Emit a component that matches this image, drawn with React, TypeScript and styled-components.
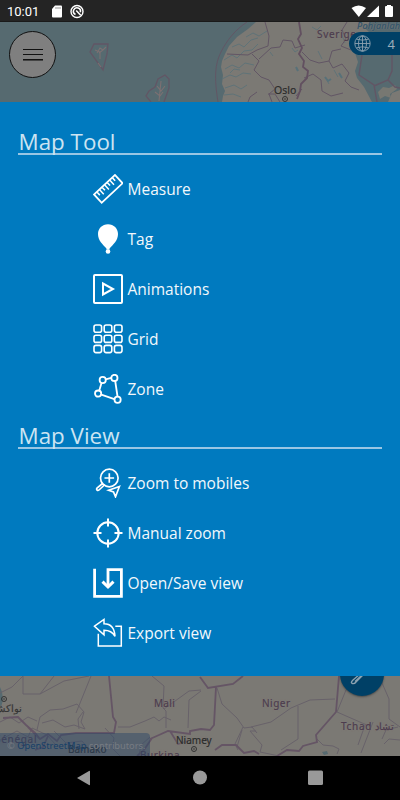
import React from "react";
import styled, { createGlobalStyle } from "styled-components";

const GlobalStyle = createGlobalStyle`
  * { box-sizing: border-box; }
  body { margin: 0; background: #000; font-family: "Noto Sans", "Open Sans", sans-serif; }
`;

const Screen = styled.div`
  width: 400px;
  height: 800px;
  display: flex;
  flex-direction: column;
  overflow: hidden;
`;

const StatusBar = styled.header`
  height: 22px;
  flex: none;
  display: flex;
  align-items: center;
  padding: 0 6px 0 7px;
  background: #242424;
  border-bottom: 1px solid #1a1a1a;
  color: #fff;
`;

const Clock = styled.span`
  font: 400 13px/20px Roboto, sans-serif;
  width: 44px;
  padding-top: 2px;
`;

const StatusIcons = styled.svg`
  display: block;
`;

const Spacer = styled.div`
  flex: 1;
`;

const MapStrip = styled.section`
  position: relative;
  height: 80px;
  flex: none;
  overflow: hidden;
  background: #7b7974;
`;

const MapDrawing = styled.svg`
  display: block;
`;

const Label = styled.span<{ $x: number; $y: number; $size?: number; $color?: string; $spacing?: number; $italic?: boolean }>`
  position: absolute;
  left: ${(p) => p.$x}px;
  top: ${(p) => p.$y}px;
  font-size: ${(p) => p.$size ?? 10}px;
  line-height: 14px;
  letter-spacing: ${(p) => p.$spacing ?? 0}px;
  font-style: ${(p) => (p.$italic ? "italic" : "normal")};
  color: ${(p) => p.$color ?? "#4d3c4e"};
  text-shadow: 0 0 1px #807e79, 0 0 2px #807e79;
  -webkit-text-stroke: 0.2px currentColor;
  white-space: nowrap;
`;

const MenuButton = styled.button`
  position: absolute;
  left: 9px;
  top: 9px;
  width: 47px;
  height: 47px;
  padding: 0;
  border: 1px solid #111;
  border-radius: 50%;
  background: #7f7f7f;
  display: flex;
  flex-direction: column;
  align-items: center;
  justify-content: center;
  gap: 4px;
`;

const MenuLine = styled.i<{ $soft?: boolean }>`
  width: 20px;
  height: 1px;
  background: #111;
  box-shadow: ${(p) => (p.$soft ? "0 1px #444" : "none")};
`;

const CountBadge = styled.div`
  position: absolute;
  right: 0;
  top: 10px;
  width: 51px;
  height: 23px;
  padding: 0 5px 0 5px;
  border-radius: 12px 0 0 12px;
  background: #004066;
  color: #9badb9;
  font-size: 13px;
  display: flex;
  align-items: center;
  justify-content: space-between;
`;

const EditButton = styled.div`
  position: absolute;
  left: 340px;
  top: -24px;
  width: 44px;
  height: 44px;
  border-radius: 50%;
  background: #004066;
  box-shadow: 0 1px 2px #333a;
`;

const Attribution = styled.div`
  position: absolute;
  left: 0;
  bottom: 0;
  width: 150px;
  height: 23px;
  padding: 1px 0 0 7px;
  border-radius: 0 4px 0 0;
  background: rgba(44, 72, 105, 0.48);
  color: #777c83;
  font-size: 9.3px;
  line-height: 23px;
  white-space: nowrap;
`;

const AttributionLink = styled.span`
  color: #173f68;
`;

const Panel = styled.main`
  height: 574px;
  flex: none;
  padding: 26px 18px 0;
  background: #007abf;
  font-family: "Open Sans", "Noto Sans", sans-serif;
`;

const Heading = styled.h2`
  margin: 0;
  height: 27px;
  padding-left: 0.5px;
  border-bottom: 2px solid #99c6e4;
  color: #cce4f2;
  font-size: 22.4px;
  line-height: 28px;
  font-weight: 400;
`;

const Tools = styled.ul`
  list-style: none;
  margin: 0 0 8px;
  padding: 9px 0 0 75px;
`;

const Tool = styled.li`
  height: 50px;
  display: flex;
  align-items: center;
  gap: 4.5px;
  color: #f2f8fc;
  font-size: 15.5px;
  line-height: 24px;
`;

const ToolIcon = styled.svg`
  width: 30px;
  height: 30px;
  flex: none;
  fill: none;
  stroke: #fff;
  stroke-width: 2;
`;

const NavBar = styled.nav`
  height: 44px;
  flex: none;
  background: #000;
`;

const icons: Record<string, React.ReactNode> = {
  Measure: (
    <g transform="translate(15.2 14.7) rotate(-43)">
      <rect x="-14.300" y="-5.400" width="28.600" height="11.200" strokeWidth="1.800" />
      <path strokeWidth="1.500" d="M-10.500-5v4M-7-5v6M-3.500-5v4M0-5v6M3.500-5v4M7-5v6M10.500-5v4" />
    </g>
  ),
  Tag: (
    <g fill="#fff" stroke="none">
      <path d="M15 .2C9.200.2 5 4.500 5 10c0 6.500 4.800 10.500 8.500 14.500h3C20.200 20.500 25 16.500 25 10 25 4.500 20.800.2 15 .2z" />
      <path d="M13.500 24h3v1h-3z" />
      <circle cx="15" cy="27.400" r="2.300" />
    </g>
  ),
  Animations: (
    <>
      <rect x="1" y="1" width="28" height="28" rx="1" />
      <path d="M10 9.500v11l10-5.500z" />
    </>
  ),
  Grid: (
    <g strokeWidth="1.600">
      {[1, 11.2, 21.4].map((y) =>
        [1, 11.2, 21.4].map((x) => <rect key={`${x}-${y}`} x={x} y={y} width="7.600" height="7.200" rx="2" />)
      )}
    </g>
  ),
  Zone: (
    <g strokeWidth="1.800">
      <path d="M12.700 5.300l5.500-1.400M22.200 7l2.400 16M21.300 25.100L8.300 20.600M6.200 16.700l2.400-7.900" />
      <circle cx="9.700" cy="6" r="3.100" />
      <circle cx="21.400" cy="3.900" r="3.100" />
      <circle cx="5.100" cy="19.600" r="3.100" />
      <circle cx="24.600" cy="25.700" r="3.100" />
    </g>
  ),
  "Zoom to mobiles": (
    <g strokeWidth="1.700">
      <circle cx="16.300" cy="10" r="8.800" />
      <path d="M16.300 5.200v9.600M11.500 10h9.600M10 16.200l1.500 1.700M9.500 15.500L4 20.200c-1.200 1.300.7 3 2 1.800l5.400-5M26.400 18.500L15.600 22.200l4.900 1.800 2 4.800z" />
    </g>
  ),
  "Manual zoom": (
    <>
      <circle cx="15" cy="15" r="10.700" />
      <path d="M15 .5v8M15 21.500v8M.5 15h8M21.500 15h8" />
    </>
  ),
  "Open/Save view": (
    <g strokeWidth="2.800">
      <path d="M1.600.8v27.600h26.800V1.600H15v17" />
      <path strokeWidth="3" d="M9.500 13.600L15 19l5.500-5.400" />
    </g>
  ),
  "Export view": (
    <g strokeWidth="1.500">
      <path d="M5.300 15.800v12.100h23V8.200h-6" />
      <path d="M1.500 8.200L11 1.500v4.300c6 0 10.500 4 11 12.500-2.500-4.500-6-6-11-6v4.500z" />
    </g>
  ),
};

const sections = [
  { title: "Map Tool", items: ["Measure", "Tag", "Animations", "Grid", "Zone"] },
  { title: "Map View", items: ["Zoom to mobiles", "Manual zoom", "Open/Save view", "Export view"] },
];

function NorthMap() {
  return (
    <MapDrawing width="400" height="80" viewBox="0 22 400 80" fill="none">
      <path fill="#566a70" d="M0 22h256l-8 7-11 8-8 9-4 8-3 7-1 6 2 8-1 9 3 7-2 5-1 6H0z" />
      <path fill="#566a70" d="M370 22h30v68l-8 3-4 9h-16l-8-15-7-9-2-7 3-9-5-15 17-14-5-5z" />
      <path fill="#777872" d="M378 92l5-5 6 1 6-3 2 4-7 5 1 4-6-2-5 3z" />
      <g stroke="#587179" strokeWidth=".8">
        <path d="M224 60l8-5 5 3 7-7 8-1 6-6M225 69l7-4 7 3 6-5 9 2M222 79l8-4 6 2 7-4 8 1M225 88l9-3 7 4 6-4M232 47l7-3 5 3 7-7 7-2M246 37l7-4 6 3 8-5M224 95l9-1 8 3M292 48l3 4 3-2M318 51l4 8M334 70l4 7M326 78l3 6M342 35l3 8M270 52l3 4M287 88l-2 8M350 48l5 4M230 73l4-4 6 1M312 27l5 3 4-4" />
        <path strokeWidth="2" d="M325 77l3 4 3-2M339 73l3 5M296 67l2 4M351 46l5 3" />
      </g>
      <g stroke="#625665" strokeWidth="1">
        <path d="M247 22c-12 8-20 18-26 30-6 12-7 25-3 50M227 54l21 1 9-5 11-4 1-10-4-14M252 54l7 7-5 9 7 7 8 3 6 9-6 5 3 8M259 59l12-11 9-1 3-7 9 1 3 7 10-3M302 52l8 8 9 3 10-2 4 7 9-4 7 9-4 8 6 6 8 3M304 78l9-4 8 6 1 11 9 5 12-3M257 92l-7 5-2 5M268 94l7 0 5 8M347 22l-5 8 4 9-5 7 10 4 5-4M329 61l3-10 9-2M302 89l-6 7" />
        <path stroke="#625060" strokeWidth="1.800" d="M299 22l2 12-3 5 4 9-3 6 5 7-1 6 5 4-1 7-6 6-1 7-3 8" />
        <path strokeWidth="1.400" d="M362 55l-3 20 15 10 3 17M392 54v17l-4 9-14 6M388 80l7 7 5 1" />
        <path strokeWidth="1.300" d="M94 44h14l-1 10-4 16-13-18zM151 102l-5-6 3-5 6-4 3-8 7-4 4 4v9l-5 14" />
      </g>
      <path stroke="#7c7072" strokeWidth="1.100" d="M97 53l3-5 3 2 3-3M95 50l5 2v7M99 53l4-3M98 63l3 4M159 101l2-20M157 86l4 5 4-5M155 92l5 4 3-4" />
      <circle cx="285" cy="99" r="2.500" stroke="#333" />
      <circle cx="285" cy="99" r=".8" fill="#333" />
    </MapDrawing>
  );
}

function SouthMap() {
  return (
    <MapDrawing width="400" height="80" viewBox="0 676 400 80" fill="none">
      <path fill="#566a70" d="M0 687l2 5 1 8-3 11z" />
      <g stroke="#68626a" strokeWidth="1">
        <path d="M0 693l12-6 11-11M23 676v18h17l14-18M40 694l24-13 25-5M37 730l3-13 10-7 13-1 14-5 7 8-3 10 4 7-11-4-9 2-12-7-11 3M76 713l15-37M83 712l-5 7 1 10M0 722l10-5 9 6 9-6 9 4M118 727h12l15-6 9-4 5 4 5-4 7 3M152 676l12 10-1 22 3 3v17M164 709l25-18 12-1M188 728l1-28 12-9M0 740l17-9 11 6 4-9 15 7 8 9M54 731l12 12 16-2 6 7M105 728l9 10-2 10 8 8M150 737l-9 8-2 11M217 688l5 16 15 14 7 10 8-1 5 6M242 730l-5 17M256 731l-6 0 12 14-2 7 19 4M251 727l20-5 20-14 19-8 25-1M298 706v33l-17 11M243 727l-8 17 3 6M346 690l-9 22 32 14M365 725l-7 20M373 722l-12 31M382 739l4-9 12-3M379 676l10 23v20l11 8M384 744l5-5 11 1M316 738l7 7 10 1 6 3-2 5" />
      </g>
      <g stroke="#655565" strokeWidth="1.800">
        <path d="M109 676l4 41 3 5-2 11H76l-15 2-4 6-9-7-8 5-5-6-9-8-8-8-15 1M48 736l-5 11-8 3M150 739l9-4 9-4 22 3v-3l11-2 9 1 4-5 2-38M200 677l8 11 25-4 10-8M152 738l-8 12-7 6M339 676l-3 36-20 23 1 7-14 4-4 5-12-1-10 6M215 750l7-5 14 0 8 8 10-2 5 3M170 731l8 13 10-3M28 727l11 11" />
      </g>
      <circle cx="4" cy="699" r="2.500" stroke="#333" />
      <circle cx="4" cy="699" r=".8" fill="#333" />
      <circle cx="194" cy="749" r="2.500" stroke="#333" />
      <circle cx="194" cy="749" r=".8" fill="#333" />
      <path fill="#566a70" d="M322 752l5-1 1 3-4 1z" />
    </MapDrawing>
  );
}

export default function App() {
  return (
    <Screen>
      <GlobalStyle />
      <StatusBar>
        <Clock>10:01</Clock>
        <StatusIcons width="34" height="16" viewBox="0 0 34 16" fill="none">
          <path fill="#fff" d="M4 2.500h6q1 0 1 1v10q0 1-1 1H2q-1 0-1-1V6z" />
          <path stroke="#777" strokeWidth=".8" d="M5 4v2M7 4v2M9 4v2" />
          <g stroke="#fff">
            <circle cx="26" cy="8.500" r="6" strokeWidth="1.400" />
            <path strokeWidth="1.600" d="M24.500 11.500a3.500 3.500 0 1 1 4.800-2.200M25.200 7.500l4.500 4.800" />
          </g>
        </StatusIcons>
        <Spacer />
        <StatusIcons width="44" height="16" viewBox="350 2 44 16" fill="#fff">
          <path d="M351.500 7q7-5 14.500 0L358.800 16z" />
          <path d="M379 4.500V16h-12z" />
          <path d="M387 4h4v1h1q1 0 1 1v9q0 1-1 1h-6q-1 0-1-1V6q0-1 1-1h1z" />
        </StatusIcons>
      </StatusBar>
      <MapStrip>
        <NorthMap />
        <Label $x={317} $y={5} $spacing={0.7}>Sverige</Label>
        <Label $x={357} $y={-3} $size={9} $spacing={0.3} $italic $color="#30536b">Pohjanlahti</Label>
        <Label $x={274} $y={61} $size={10.5} $color="#2b2b2b">Oslo</Label>
        <MenuButton aria-label="Menu">
          <MenuLine />
          <MenuLine />
          <MenuLine $soft />
        </MenuButton>
        <CountBadge>
          <svg width="17" height="17" viewBox="0 0 17 17" fill="none" stroke="#8ca2b0" strokeWidth=".9">
            <circle cx="8.500" cy="8.500" r="7.700" />
            <ellipse cx="8.500" cy="8.500" rx="4" ry="7.700" />
            <path d="M8.500 1v15M1 8.500h15M2.500 4.200q6 2 12 0M2.500 12.800q6-2 12 0" />
          </svg>
          <span>4</span>
        </CountBadge>
      </MapStrip>
      <Panel>
        {sections.map((section) => (
          <section key={section.title}>
            <Heading>{section.title}</Heading>
            <Tools>
              {section.items.map((name) => (
                <Tool key={name}>
                  <ToolIcon viewBox="0 0 30 30">{icons[name]}</ToolIcon>
                  {name}
                </Tool>
              ))}
            </Tools>
          </section>
        ))}
      </Panel>
      <MapStrip>
        <SouthMap />
        <Label $x={-17} $y={25} $size={10} $color="#343434">نواكشوط</Label>
        <Label $x={154} $y={20} $spacing={0.3}>Mali</Label>
        <Label $x={262} $y={20} $spacing={0.5}>Niger</Label>
        <Label $x={341} $y={43} $spacing={0.7}>Tchad تشاد</Label>
        <Label $x={-5} $y={56} $spacing={0.7}>Sénégal</Label>
        <Label $x={176} $y={57} $color="#2b2b2b">Niamey</Label>
        <Label $x={68} $y={66} $color="#2b2b2b">Bamako</Label>
        <Label $x={140} $y={72} $spacing={0.5}>Burkina</Label>
        <Attribution>
          © <AttributionLink>OpenStreetMap</AttributionLink> contributors.
        </Attribution>
        <EditButton>
          <svg width="44" height="44" viewBox="0 0 44 44" fill="none" stroke="#8ca2b0" strokeWidth="1.300">
            <path d="M26 17L13 28q-3 3-.5 3.500 2 .5 3.500-1.500l13-13M23 22l-8 7.500" />
          </svg>
        </EditButton>
      </MapStrip>
      <NavBar>
        <svg width="400" height="44" viewBox="0 756 400 44" fill="#999">
          <path d="M77 778l12-7q1-.5 1 .5v13q0 1-1 .5z" />
          <circle cx="200" cy="777.500" r="7" />
          <rect x="308" y="770.500" width="15" height="14.500" rx="1.500" />
        </svg>
      </NavBar>
    </Screen>
  );
}
